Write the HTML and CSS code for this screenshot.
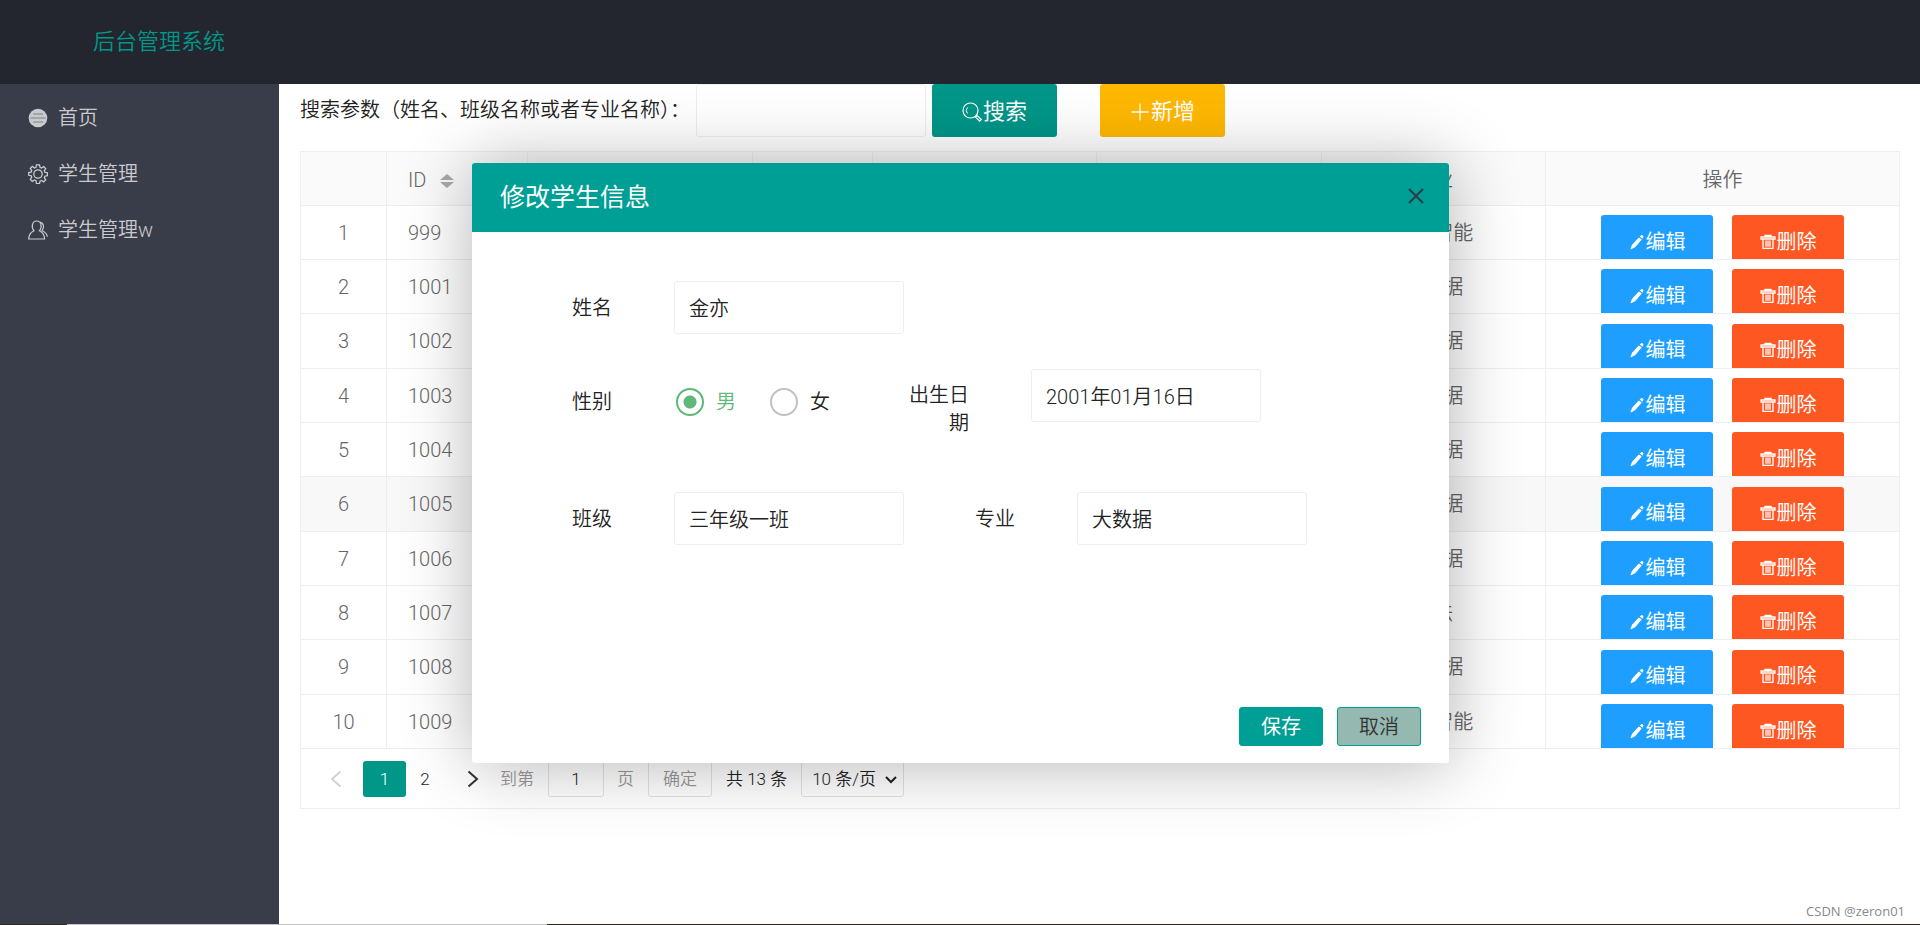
FILE: index.html
```html
<!DOCTYPE html>
<html lang="zh-CN">
<head>
<meta charset="utf-8">
<title>后台管理系统</title>
<link rel="stylesheet" href="styles.css">
</head>
<body>
<svg class="sprite" aria-hidden="true">
  <symbol id="i-edit" viewBox="0 0 16 16"><path fill="currentColor" d="M12.200 1.200c1-.6 2.600.6 2.200 1.900l-.9 1.600-2.900-2.100zM9.800 3.400l3 2.200-6.700 7.600-3.900 2c-.5.2-.8-.1-.6-.6l1.500-3.800z"/></symbol>
  <symbol id="i-trash" viewBox="0 0 16 16"><g fill="none" stroke="currentColor" stroke-width="1.300"><path d="M1 5V3h14v2zM5 3V1.500h6V3M3 5v9.300h10V5M6 6.500v6.300M8 6.500v6.300M10 6.500v6.300"/></g></symbol>
  <symbol id="i-search" viewBox="0 0 20 20"><circle cx="8.500" cy="8.500" r="7.500" fill="none" stroke="currentColor" stroke-width="1.200"/><path d="M5.500 11.500a4.500 4.500 0 0 1 0-6" fill="none" stroke="currentColor"/><path d="M13.500 15l1.600-1.500 4.200 4-1.600 1.600z" fill="none" stroke="currentColor" stroke-width="1.200"/></symbol>
  <symbol id="i-plus" viewBox="0 0 20 20"><path d="M10 1.500v17M1.500 10h17" stroke="currentColor" stroke-width="1.300"/></symbol>
</svg>
<header class="topbar"><h1 class="logo">后台管理系统</h1></header>
<div class="shell">
  <nav class="side">
    <a class="side-link" href="#"><svg class="side-icon" viewBox="0 0 20 20"><circle cx="10" cy="10" r="9.300" fill="currentColor"/><path d="M5 6h10M2.500 10h15M5 14h10" stroke="#7d8087" stroke-width="1"/></svg>首页</a>
    <a class="side-link" href="#"><svg class="side-icon" viewBox="0 0 20 20"><g fill="none" stroke="currentColor" stroke-width="1.300"><path d="M8.500.800h3l.5 2.600 1.500.6 2.200-1.400 2 2-1.400 2.200.6 1.500 2.500.5v2.900l-2.500.5-.6 1.500 1.400 2.200-2 2-2.200-1.400-1.500.6-.5 2.600h-3L8 16.600 6.500 16l-2.200 1.400-2-2 1.400-2.200-.6-1.500L.700 11.300V8.600l2.400-.5.6-1.500-1.400-2.200 2-2L6.500 4 8 3.400z"/><circle cx="10" cy="10" r="4.200"/></g></svg>学生管理</a>
    <a class="side-link" href="#"><svg class="side-icon" viewBox="0 0 20 20"><g fill="none" stroke="currentColor" stroke-width="1.200"><path d="M6 10.800C3 7.500 4 1 8.700 1s5.700 6.500 2.700 9.800c2.800 1.200 5 3.200 5.200 8.200H.7c.2-4.700 2.400-7 5.300-8.200z"/><path d="M12 2.300c3.600.2 4.800 5.200 2 8.500 3 1.200 5 3 5.300 6"/></g></svg>学生管理w</a>
  </nav>
  <main class="main">
    <form class="search">
      <label class="search-label" for="q">搜索参数（姓名、班级名称或者专业名称）：</label>
      <input class="field" id="q" type="text">
      <button class="btn btn-search" type="button"><svg class="btn-icon"><use href="#i-search"/></svg>搜索</button>
      <button class="btn btn-add" type="button"><svg class="btn-icon"><use href="#i-plus"/></svg>新增</button>
    </form>
    <section class="panel">
      <table class="grid">
        <colgroup><col class="c-num"><col class="c-id"><col><col class="c-sex"><col><col><col><col class="c-act"></colgroup>
        <thead><tr><th></th><th class="left">ID<svg class="sort" viewBox="0 0 14 14"><path d="M7 0l7 6H0zM7 14l7-6H0z" fill="#aaa"/></svg></th><th></th><th></th><th></th><th></th><th>专业</th><th>操作</th></tr></thead>
        <tbody id="rows"></tbody>
      </table>
      <div class="pager">
        <button class="pg-arrow off" type="button" aria-label="上一页"><svg viewBox="0 0 12 18"><path d="M10.500 1.500L2 9l8.500 7.500"/></svg></button>
        <button class="pg-num on" type="button">1</button>
        <button class="pg-num" type="button">2</button>
        <button class="pg-arrow next" type="button" aria-label="下一页"><svg viewBox="0 0 12 18"><path d="M1.500 1.500L10 9l-8.500 7.500"/></svg></button>
        <label class="pg-dim" for="page">到第</label>
        <input class="pg-box pg-input" id="page" type="text" value="1">
        <span class="pg-dim">页</span>
        <button class="pg-box pg-go" type="button">确定</button>
        <span class="pg-total">共 13 条</span>
        <span class="pg-wrap"><select class="pg-box pg-select" aria-label="每页条数"><option>10 条/页</option></select><svg class="caret" viewBox="0 0 12 8"><path d="M1 1l5 5 5-5"/></svg></span>
      </div>
    </section>
  </main>
</div>
<footer class="strip"><span class="strip-light"></span></footer>
<span class="mark">CSDN @zeron01</span>

<div class="dialog" role="dialog" aria-labelledby="dlg-title">
  <div class="dlg-head"><h2 class="dlg-title" id="dlg-title">修改学生信息</h2><button class="dlg-close" type="button" aria-label="关闭"><svg viewBox="0 0 16 16"><path d="M1 1l14 14M15 1L1 15"/></svg></button></div>
  <form class="dlg-body">
    <div class="row">
      <label class="lab" for="name">姓名</label><input class="field" id="name" type="text" value="金亦">
    </div>
    <div class="row row-mid">
      <span class="lab">性别</span>
      <div class="radios">
        <label class="radio"><input type="radio" name="sex" checked><span>男</span></label>
        <label class="radio"><input type="radio" name="sex"><span>女</span></label>
      </div>
      <label class="lab lab-date" for="birth">出生日期</label><input class="field" id="birth" type="text" value="2001年01月16日">
    </div>
    <div class="row">
      <label class="lab" for="cls">班级</label><input class="field" id="cls" type="text" value="三年级一班">
      <label class="lab lab-major" for="major">专业</label><input class="field" id="major" type="text" value="大数据">
    </div>
  </form>
  <div class="dlg-foot"><button class="dbtn save" type="button">保存</button><button class="dbtn cancel" type="button">取消</button></div>
</div>
<script src="app.js"></script>
</body>
</html>
```
FILE: styles.css
```css
* { box-sizing: border-box; }
body {
  margin: 0;
  min-height: 100vh;
  display: flex;
  flex-direction: column;
  font: 350 20px/28px Roboto, "Noto Sans CJK SC", sans-serif;
  color: #222;
  background: #fff;
}
button, input, select { font: inherit; color: inherit; margin: 0; }
button { border: 0; padding: 0; background: none; cursor: pointer; }
.sprite { position: absolute; width: 0; height: 0; }

.topbar { height: 84px; background: #23262e; display: flex; align-items: center; padding-left: 93px; }
.logo { margin: 0; font-size: 22px; font-weight: 350; color: #009688; }

.shell { flex: 1; display: flex; }
.side { width: 279px; background: #393d49; padding-top: 6px; }
.side-link { display: flex; align-items: center; gap: 10px; height: 56px; padding-left: 28px; color: #c9cacd; text-decoration: none; }
.side-icon { width: 20px; height: 20px; }

.main { flex: 1; min-width: 0; padding: 0 20px 0 21px; }
.search { display: flex; align-items: center; height: 53px; margin-bottom: 14px; }
.search-label { width: 396px; padding-bottom: 2px; white-space: nowrap; }
.field { width: 230px; height: 53px; border: 1px solid #eee; border-radius: 3px; padding: 0 14px; background: #fff; outline: 0; }
.btn { display: flex; align-items: center; justify-content: center; gap: 1px; width: 125px; height: 53px; padding-top: 2px; border-radius: 3px; color: #fff; font-size: 22px; font-weight: 400; }
.btn-icon { width: 20px; height: 20px; }
.btn-search { margin-left: 6px; background: #009688; }
.btn-add { margin-left: 43px; background: #ffb800; }

.panel { border: 1px solid #eee; }
.grid { width: 100%; table-layout: fixed; border-collapse: separate; border-spacing: 0; color: #666; }
.c-num { width: 86px; }
.c-id { width: 141px; }
.c-sex { width: 120px; }
.c-act { width: 353px; }
.grid th, .grid td { height: 54px; padding: 0; font-weight: 350; text-align: center; border: solid #eee; border-width: 0 1px 1px 0; }
.grid th { padding-top: 2px; background: #fafafa; }
.grid tr:nth-child(3n) td { height: 55px; }
.grid th:last-child, .grid td:last-child { border-right: 0; }
.grid .left { text-align: left; padding-left: 21px; }
.grid .hover td { background: #f8f8f8; }
.sort { width: 14px; height: 14px; margin-left: 14px; vertical-align: -1px; }
.acts { display: flex; justify-content: center; gap: 19px; height: 53px; padding-top: 9px; overflow: hidden; }
.act { display: flex; align-items: center; justify-content: center; gap: 1px; flex: none; width: 112px; height: 53px; border-radius: 3px; color: #fff; font-weight: 400; background: #1e9fff; }
.act.del { background: #ff5722; }
.act svg { width: 16px; height: 16px; }

.pager { display: flex; align-items: center; height: 59px; padding-left: 20px; font-size: 17px; }
.pg-arrow { width: 42px; height: 36px; display: flex; align-items: center; justify-content: center; }
.pg-arrow.off { width: 30px; margin-right: 12px; }
.pg-arrow.next { margin-left: 8px; }
.pg-arrow svg { width: 12px; height: 18px; fill: none; stroke: #333; stroke-width: 2; }
.pg-arrow.off svg { stroke: #d2d2d2; }
.pg-num { width: 43px; height: 36px; border-radius: 3px; }
.pg-num.on { background: #009688; color: #fff; }
.pg-num + .pg-num { width: 38px; }
.pg-dim { color: #999; margin-left: 6px; }
.pg-box { height: 36px; border: 1px solid #e2e2e2; border-radius: 3px; background: #fff; }
.pg-input { width: 56px; margin: 0 7px 0 14px; text-align: center; padding: 0; }
.pg-go { width: 64px; margin-left: 14px; color: #999; }
.pg-total { margin: 0 14px; }
.pg-wrap { position: relative; }
.pg-select { width: 103px; padding-left: 10px; appearance: none; }
.caret { position: absolute; right: 7px; top: 15px; width: 12px; height: 8px; fill: none; stroke: #222; stroke-width: 2; }

.strip { height: 1px; background: #2b2720; padding-left: 67px; display: flex; }
.strip-light { width: 480px; background: #c4c4c4; }
.mark { position: absolute; right: 15px; bottom: 4px; font: 13px/20px "Open Sans", sans-serif; color: #888; }

.dialog {
  position: absolute;
  left: 472px;
  top: 163px;
  width: 977px;
  min-height: 600px;
  display: flex;
  flex-direction: column;
  background: #fff;
  border-radius: 3px;
  box-shadow: 1px 1px 70px rgba(0, 0, 0, .3);
}
.dlg-head { display: flex; align-items: center; justify-content: space-between; height: 69px; padding: 0 25px 0 28px; background: #009f95; border-radius: 3px 3px 0 0; }
.dlg-title { margin: 0; font-size: 25px; font-weight: 400; color: #fff; }
.dlg-close { width: 16px; height: 16px; margin-bottom: 3px; }
.dlg-close svg { display: block; width: 16px; height: 16px; stroke: #2d3d48; stroke-width: 2; }
.dlg-body { flex: 1; padding: 49px 0 0 84px; display: flex; flex-direction: column; }
.row { display: flex; align-items: center; height: 53px; }
.row-mid { align-items: flex-start; margin: 35px 0 70px; }
.lab { width: 56px; text-align: right; margin-right: 62px; }
.row-mid .lab, .radios { padding-top: 19px; }
.row-mid .lab-date { width: 63px; padding-top: 12px; }
.lab-major { margin-left: 55px; }
.radios { display: flex; gap: 34px; width: 232px; padding-left: 2px; }
.radio { display: flex; align-items: center; gap: 12px; }
.radio input { appearance: none; width: 28px; height: 28px; margin: 0; border: 2px solid #c2c2c2; border-radius: 50%; }
.radio input:checked { border-color: #5fb878; background: radial-gradient(circle, #5fb878 6px, transparent 7px); }
.radio input:checked + span { color: #5fb878; }
.dlg-foot { display: flex; justify-content: flex-end; gap: 14px; padding: 0 28px 17px 0; }
.dbtn { width: 84px; height: 39px; border: 1px solid #009f95; border-radius: 3px; }
.save { background: #009f95; color: #fff; font-weight: 400; }
.cancel { background: #95b8b1; color: #333; }
```
FILE: app.js
```js
const students = [
  [999, "人工智能"], [1001, "大数据"], [1002, "大数据"], [1003, "大数据"], [1004, "大数据"],
  [1005, "大数据"], [1006, "大数据"], [1007, "算法"], [1008, "大数据"], [1009, "人工智能"]
];
document.getElementById("rows").innerHTML = students.map(([id, major], i) => `
  <tr${i === 5 ? ' class="hover"' : ""}>
    <td>${i + 1}</td><td class="left">${id}</td><td></td><td></td><td></td><td></td><td>${major}</td>
    <td><div class="acts">
      <button class="act" type="button"><svg><use href="#i-edit"/></svg>编辑</button>
      <button class="act del" type="button"><svg><use href="#i-trash"/></svg>删除</button>
    </div></td>
  </tr>`).join("");
```
